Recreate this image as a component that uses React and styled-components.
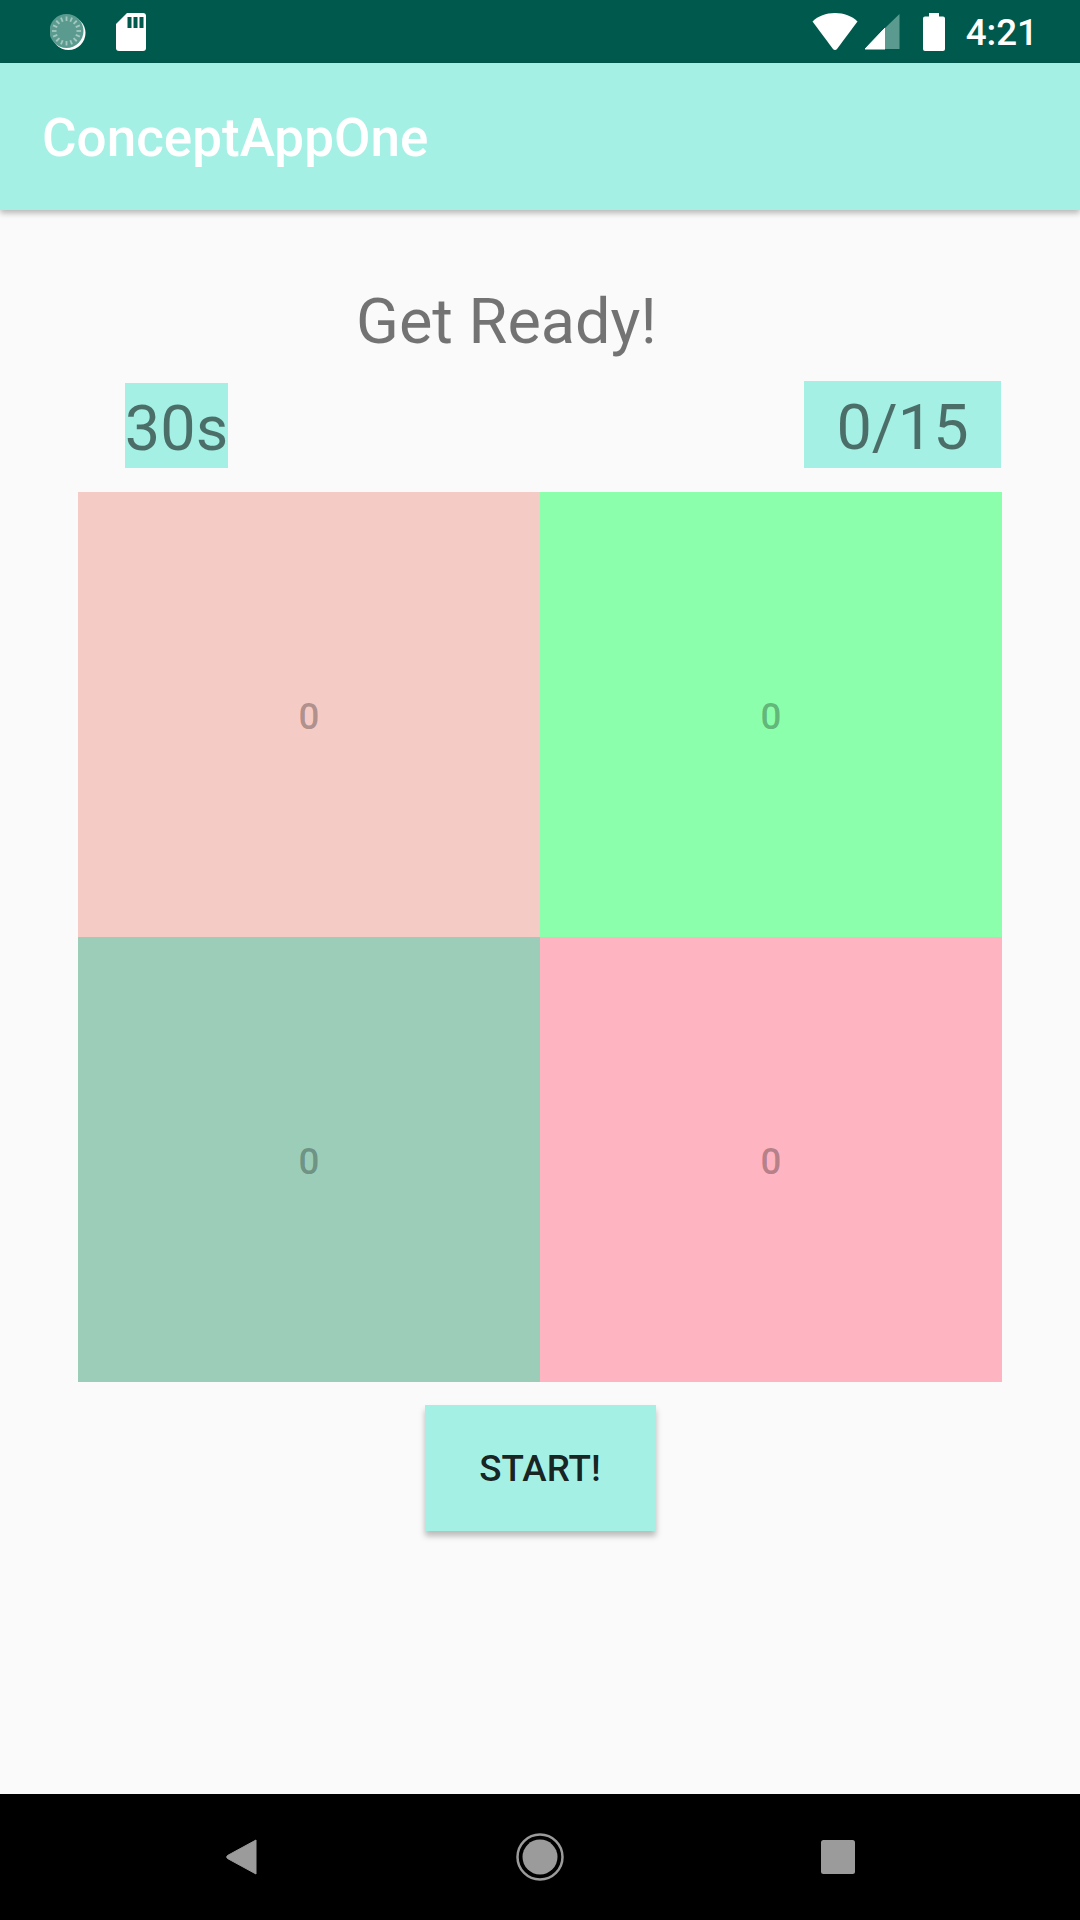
import React from "react";
import styled, { createGlobalStyle } from "styled-components";

const GlobalStyle = createGlobalStyle`
  html, body {
    margin: 0;
    padding: 0;
    background: #fafafa;
    font-family: Roboto, "Liberation Sans", sans-serif;
  }
`;

const cells = [
  { id: "a", color: "#f5cbc5" },
  { id: "b", color: "#8bffab" },
  { id: "c", color: "#9bcdb9" },
  { id: "d", color: "#ffb4c1" },
];

const App = () => {
  return (
    <Screen>
      <GlobalStyle />
      <StatusBar>
        <StatusLeft>
          <svg width="36" height="38" viewBox="0 0 36 38">
            <circle cx="18.5" cy="20" r="17" fill="#fff" />
            <circle cx="16.5" cy="18" r="17" fill="#5b9b8f" />
            {Array.from({ length: 16 }).map((_, i) => (
              <line
                key={i}
                x1="16.5"
                y1="3.5"
                x2="16.5"
                y2="8"
                stroke="#a3c8c1"
                strokeWidth="1.8"
                transform={`rotate(${i * 22.5} 16.5 18)`}
              />
            ))}
          </svg>
          <svg width="30" height="38" viewBox="0 0 30 38">
            <path
              d="M11 0h16a3 3 0 0 1 3 3v32a3 3 0 0 1-3 3H3a3 3 0 0 1-3-3V11z"
              fill="#fff"
            />
            <path d="M12 4h4v11h-4zM18 4h4v11h-4zM24 4h4v11h-4z" fill="#00594d" transform="translate(-0.5 0)" />
          </svg>
        </StatusLeft>
        <StatusRight>
          <svg width="46" height="38" viewBox="0 0 46 38">
            <path
              d="M23 0C14 0 6 3 0.5 8.5L21 36a2.5 2.5 0 0 0 4 0L45.5 8.5C40 3 32 0 23 0z"
              fill="#fff"
            />
          </svg>
          <svg width="35" height="36" viewBox="0 0 35 36">
            <path d="M0 35 20 14v21z" fill="#fff" stroke="#fff" strokeLinejoin="round" />
            <path d="M20 14 34.5 0v35H20z" fill="#5b9b8f" />
          </svg>
          <svg width="22" height="38" viewBox="0 0 22 38">
            <path
              d="M6 0h10v3.5h4a2 2 0 0 1 2 2V36a2 2 0 0 1-2 2H2a2 2 0 0 1-2-2V5.500a2 2 0 0 1 2-2h4z"
              fill="#fff"
            />
          </svg>
          <Clock>4:21</Clock>
        </StatusRight>
      </StatusBar>

      <AppBar>ConceptAppOne</AppBar>

      <Main>
        <Heading>Get Ready!</Heading>
        <Stats>
          <TimeStat>30s</TimeStat>
          <ScoreStat>0/15</ScoreStat>
        </Stats>
        <Board>
          {cells.map((cell) => (
            <Cell key={cell.id} $color={cell.color}>
              0
            </Cell>
          ))}
        </Board>
        <StartButton>START!</StartButton>
      </Main>

      <NavBar>
        <svg width="32" height="36" viewBox="0 0 32 36">
          <path
            d="M30 1 1.500 16.500a2 2 0 0 0 0 3L30 35z"
            fill="#9b9b9b"
            stroke="#9b9b9b"
            strokeLinejoin="round"
            strokeWidth="1"
          />
        </svg>
        <svg width="48" height="48" viewBox="0 0 48 48">
          <circle cx="24" cy="24" r="22.500" fill="none" stroke="#9b9b9b" strokeWidth="2.500" />
          <circle cx="24" cy="24" r="17.500" fill="#9b9b9b" />
        </svg>
        <svg width="34" height="34" viewBox="0 0 34 34">
          <rect width="34" height="34" rx="2.500" fill="#9b9b9b" />
        </svg>
      </NavBar>
    </Screen>
  );
};

const Screen = styled.div`
  width: 1080px;
  height: 1920px;
  display: flex;
  flex-direction: column;
  background: #fafafa;
  overflow: hidden;
`;

const StatusBar = styled.div`
  height: 63px;
  flex-shrink: 0;
  display: flex;
  align-items: center;
  justify-content: space-between;
  padding: 0 42px 0 50px;
  background: #00594d;
`;

const StatusLeft = styled.div`
  display: flex;
  align-items: center;
  gap: 30px;
`;

const StatusRight = styled.div`
  display: flex;
  align-items: center;
  gap: 7px;

  & svg:nth-child(2) {
    margin-top: 1px;
  }

  & svg:nth-child(3) {
    margin-left: 16px;
  }
`;

const Clock = styled.span`
  margin-left: 14px;
  padding-top: 3px;
  color: #fff;
  font-size: 36.75px;
  line-height: 38px;
  font-weight: 500;
`;

const AppBar = styled.div`
  position: relative;
  height: 147px;
  flex-shrink: 0;
  display: flex;
  align-items: center;
  padding: 2px 0 0 42px;
  box-sizing: border-box;
  background: #a5f0e5;
  color: #fff;
  font-size: 53px;
  font-weight: 500;
  box-shadow: 0 3px 6px rgba(0, 0, 0, 0.28);
`;

const Main = styled.div`
  flex: 1;
  padding: 75px 78px 0;
`;

const Heading = styled.div`
  margin-left: 278px;
  font-size: 63px;
  line-height: 74px;
  color: rgba(0, 0, 0, 0.54);
`;

const Stats = styled.div`
  display: flex;
  align-items: flex-end;
  justify-content: space-between;
  margin-top: 22px;
`;

const TimeStat = styled.div`
  margin-left: 47px;
  width: 103px;
  height: 85px;
  box-sizing: border-box;
  padding-top: 5px;
  display: flex;
  align-items: center;
  justify-content: center;
  background: #a5f0e5;
  color: rgba(0, 0, 0, 0.54);
  font-size: 63px;
`;

const ScoreStat = styled(TimeStat)`
  margin: 0 1px 0 0;
  width: 197px;
  height: 87px;
`;

const Board = styled.div`
  display: grid;
  grid-template-columns: 462px 462px;
  grid-template-rows: 445px 445px;
  margin-top: 24px;
`;

const Cell = styled.div`
  box-sizing: border-box;
  padding-top: 4px;
  display: flex;
  align-items: center;
  justify-content: center;
  background: ${(props) => props.$color};
  color: rgba(0, 0, 0, 0.3);
  font-size: 36.75px;
  font-weight: 500;
`;

const StartButton = styled.div`
  width: 231px;
  height: 126px;
  margin: 23px auto 0;
  display: flex;
  align-items: center;
  justify-content: center;
  background: #a5f0e5;
  color: rgba(0, 0, 0, 0.87);
  font-size: 36.75px;
  font-weight: 500;
  box-shadow: 0 5px 6px rgba(0, 0, 0, 0.26);
`;

const NavBar = styled.div`
  height: 126px;
  flex-shrink: 0;
  display: flex;
  align-items: center;
  justify-content: space-between;
  padding: 0 225px 0 226px;
  background: #000;
`;

export default App;
